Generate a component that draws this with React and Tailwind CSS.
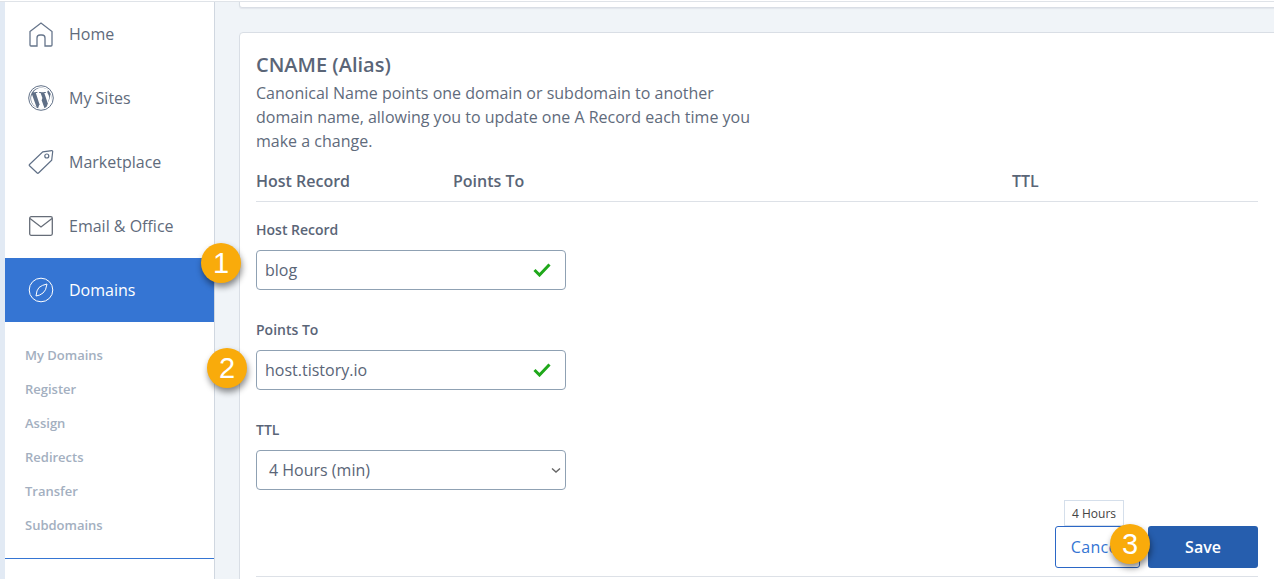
const navItems = [
  { label: "Home", icon: HomeIcon },
  { label: "My Sites", icon: WpIcon },
  { label: "Marketplace", icon: TagIcon },
  { label: "Email & Office", icon: MailIcon },
  { label: "Domains", icon: CompassIcon, active: true },
];

const subItems = ["My Domains", "Register", "Assign", "Redirects", "Transfer", "Subdomains"];

function HomeIcon() {
  return (
    <svg width="24" height="25" viewBox="0 0 24 25" fill="none" stroke="#66758b" strokeWidth="1.3">
      <path d="M1 9.500 12 1l11 8.500V23a1 1 0 0 1-1 1h-6v-8a3 3 0 0 0-3-3h-2a3 3 0 0 0-3 3v8H2a1 1 0 0 1-1-1z" />
    </svg>
  );
}

function WpIcon() {
  return (
    <svg width="26" height="26" viewBox="0 0 26 26">
      <circle cx="13" cy="13" r="12.300" fill="none" stroke="#5f6f86" strokeWidth="1" />
      <circle cx="13" cy="13" r="10.600" fill="#5f6f86" />
      <path
        fill="#fff"
        d="M4 9.500 8.700 22.400l-.1.100A10 10 0 0 1 4 9.500zm16.300 6.500c.5-1.300.9-2.400.9-3.700 0-1.300-.5-2.200-.9-2.900-.5-.9-1-1.600-1-2.400 0-.9.700-1.700 1.500-1.800a10.500 10.500 0 0 0-15.500 2h.7c1.200 0 3-.2 3-.2.600 0 .7.900.1.900l-1.300.2 4.100 12.300 2.500-7.400-1.800-4.900-1.200-.2c-.6 0-.5-1 .1-.9 0 0 1.900.2 3 .2s3-.2 3-.2c.6 0 .7.900.1.900l-1.300.2 4.100 12.200zM13.200 14l-3.200 9.500a10.500 10.500 0 0 0 6.500-.2zm9-5.500c.1.400.1.800.1 1.200 0 1.100-.2 2.400-.8 4l-3.300 9.500a10.500 10.500 0 0 0 4-14.700z"
      />
    </svg>
  );
}

function TagIcon() {
  return (
    <svg width="26" height="26" viewBox="0 0 26 26" fill="none" stroke="#5f6f86" strokeWidth="1.2">
      <path d="M1.500 15.500 14.800 2.900 23.800 1.600a.8.800 0 0 1 .9.900l-1 8.600L10.500 24a.9.900 0 0 1-1.300 0l-7.700-7.200a.9.900 0 0 1 0-1.300z" />
      <circle cx="18.800" cy="7" r="2" />
    </svg>
  );
}

function MailIcon() {
  return (
    <svg width="24" height="20" viewBox="0 0 24 20" fill="none" stroke="#666d78" strokeWidth="1.300">
      <rect x="0.700" y="0.700" width="22.600" height="18.600" rx="1.500" />
      <path d="M1 2.500 12 11 23 2.500" />
    </svg>
  );
}

function CompassIcon() {
  return (
    <svg width="26" height="26" viewBox="0 0 26 26" fill="none" stroke="#fff" strokeWidth="1">
      <circle cx="13" cy="13" r="11.800" />
      <path d="M19 7q-1 7-4 9-3 2.500-7 3 .5-6 3-8.500 3-2.500 8-3.500z" />
    </svg>
  );
}

function CheckMark() {
  return (
    <svg width="18" height="14" viewBox="0 0 18 14" fill="none" stroke="#1fa81a" strokeWidth="3">
      <path d="m1.500 7 5 5L16.500 1.500" />
    </svg>
  );
}

function Badge({ n, className }) {
  return (
    <div
      className={`absolute flex h-10 w-10 items-center justify-center rounded-full bg-[#f9ab0b] text-[29px] leading-none text-white shadow-[1px_4px_6px_rgba(0,0,0,0.45)] font-['Liberation_Sans',sans-serif] ${className}`}
    >
      {n}
    </div>
  );
}

function TextField({ label, value }) {
  return (
    <div>
      <label className="block text-sm leading-[20px] font-semibold text-[#5a6577]">{label}</label>
      <div className="mt-[10px] flex h-10 w-[310px] items-center justify-between rounded-[4px] border border-[#8fa1b3] bg-white pr-[14px] pl-2">
        <span className="text-base text-[#5a6577]">{value}</span>
        <CheckMark />
      </div>
    </div>
  );
}

export default function App() {
  return (
    <div className="relative mt-px flex h-[578px] w-full overflow-hidden border-t border-[#dfe3e8] bg-[#f0f4f8] font-['Open_Sans',sans-serif]">
      <div className="w-[5px] shrink-0 bg-[#e2eaf4]" />

      <aside className="h-full w-[210px] shrink-0 border-r border-[#d0d7e0] bg-white">
        <nav>
          {navItems.map(({ label, icon: Icon, active }) => (
            <div
              key={label}
              className={`flex h-16 items-center ${active ? "bg-[#3575d3] text-white" : "text-[#5f6b7c]"}`}
            >
              <div className="flex w-[64px] justify-center pl-[8px]">
                <Icon />
              </div>
              <span className="text-base">{label}</span>
            </div>
          ))}
        </nav>
        <ul className="border-b border-[#3575d3] pt-[17px] pb-[15px] pl-5">
          {subItems.map((s) => (
            <li key={s} className="flex h-[34px] items-center text-[13px] font-semibold text-[#a3afc0]">
              {s}
            </li>
          ))}
        </ul>
      </aside>

      <main className="min-w-0 flex-1 pl-6">
        <div className="-mt-[2px] -mr-1 h-2 rounded-b-[3px] border border-[#d9dee5] bg-white shadow-[0_1px_1px_#e2e6eb]" />

        <section className="mt-[24px] -mr-1 h-[600px] rounded-tl-[4px] border border-[#d9dee5] bg-white pt-[17px] pr-[19px] pl-4">
          <h2 className="text-[20px] leading-[30px] font-semibold text-[#5a6577]">CNAME (Alias)</h2>
          <p className="w-[510px] pt-[1px] text-base leading-6 text-[#5f6b7c]">
            Canonical Name points one domain or subdomain to another domain name, allowing you to update one A Record
            each time you make a change.
          </p>

          <div className="flex h-[49px] items-end border-b border-[#dde1e7] pb-[8px] text-base font-semibold text-[#5a6577]">
            <span className="w-[197px]">Host Record</span>
            <span className="w-[559px]">Points To</span>
            <span>TTL</span>
          </div>

          <form className="pt-[18px]">
            <TextField label="Host Record" value="blog" />
            <div className="mt-[30px]">
              <TextField label="Points To" value="host.tistory.io" />
            </div>
            <div className="mt-[30px]">
              <label className="block text-sm leading-[20px] font-semibold text-[#5a6577]">TTL</label>
              <div className="mt-[10px] flex h-10 w-[310px] items-center justify-between rounded-[4px] border border-[#8fa1b3] bg-white pr-[3px] pl-3">
                <span className="text-base text-[#5a6577]">4 Hours (min)</span>
                <svg width="12" height="12" viewBox="0 0 12 12" fill="none" stroke="#666" strokeWidth="1.400">
                  <path d="m2 4.500 4 3.500 4-3.500" />
                </svg>
              </div>
            </div>

            <div className="mt-[36px] flex justify-end gap-2">
              <button type="button" className="h-[42px] w-[85px] rounded-[3px] border border-[#2b67c6] bg-white pr-[2px] text-base font-normal tracking-[0.3px] text-[#3575d3]">
                Cancel
              </button>
              <button type="button" className="h-[42px] w-[110px] rounded-[3px] bg-[#265eae] text-base font-semibold text-white">
                Save
              </button>
            </div>
            <div className="mt-2 border-t border-[#dde1e7]" />
          </form>
        </section>
      </main>

      <div className="absolute top-[498px] left-[1064px] flex h-[26px] w-[60px] items-center justify-center border border-[#d5dfeb] bg-white pt-[2px] text-xs text-[#444]">
        4 Hours
      </div>
      <Badge n="1" className="top-[241px] left-[201px]" />
      <Badge n="2" className="top-[346px] left-[207px]" />
      <Badge n="3" className="top-[522px] left-[1110px]" />
    </div>
  );
}
